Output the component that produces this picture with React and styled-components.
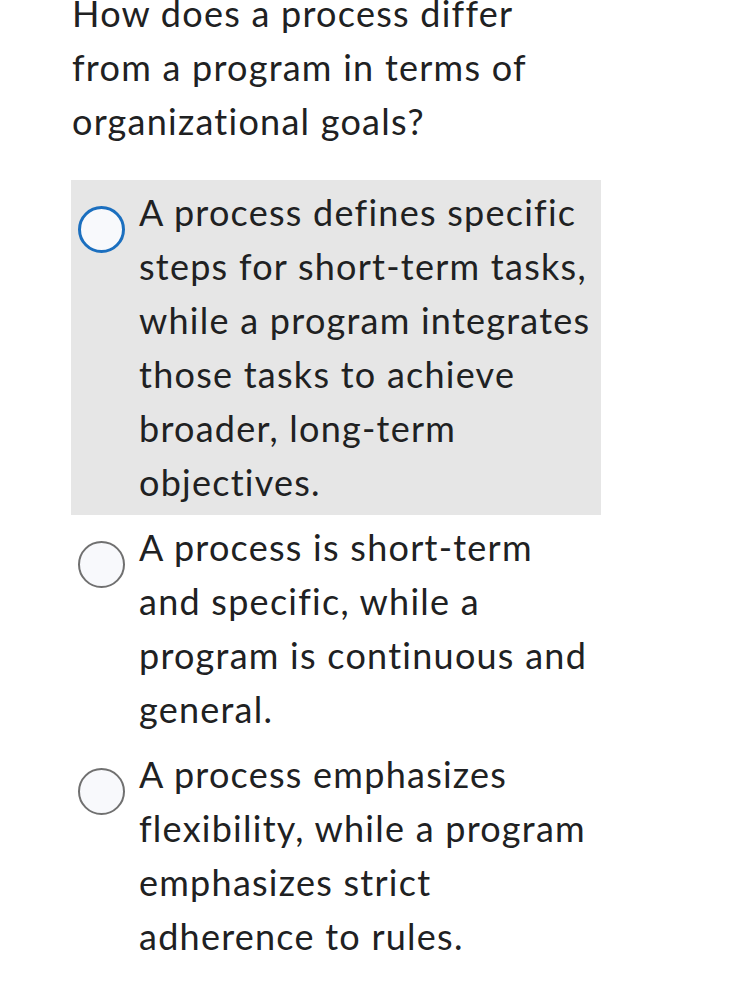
import React, { useState } from 'react';
import styled, { createGlobalStyle } from 'styled-components';

const GlobalStyle = createGlobalStyle`
  html, body {
    margin: 0;
    padding: 0;
    background: #ffffff;
  }
  body {
    font-family: Lato, "Open Sans", sans-serif;
    color: #202122;
    font-variant-ligatures: none;
  }
`;

const options = [
  'A process defines specific steps for short-term tasks, while a program integrates those tasks to achieve broader, long-term objectives.',
  'A process is short-term and specific, while a program is continuous and general.',
  'A process emphasizes flexibility, while a program emphasizes strict adherence to rules.',
];

function App() {
  const [focused, setFocused] = useState(0);

  return (
    <Page>
      <GlobalStyle />
      <Question>
        How does a process differ from a program in terms of organizational
        goals?
      </Question>
      <OptionList>
        {options.map((text, idx) => (
          <Option
            key={idx}
            $active={focused === idx}
            onClick={() => setFocused(idx)}
          >
            <Radio $active={focused === idx} />
            <OptionText>{text}</OptionText>
          </Option>
        ))}
      </OptionList>
    </Page>
  );
}

const Page = styled.div`
  padding-left: 71px;
  width: 530px;
  overflow: hidden;
`;

const Question = styled.p`
  margin: -14px 0 32px 1px;
  max-width: 480px;
  font-size: 36px;
  line-height: 54px;
  letter-spacing: 1.25px;
`;

const OptionList = styled.div`
  display: flex;
  flex-direction: column;
`;

const Option = styled.div`
  display: flex;
  align-items: flex-start;
  padding: 5px 0 6px;
  background: ${(p) => (p.$active ? '#e6e6e6' : 'transparent')};
  cursor: pointer;
`;

const Radio = styled.span`
  flex: none;
  box-sizing: border-box;
  width: 47px;
  height: 47px;
  margin: 21px 0 0 7px;
  border-radius: 50%;
  background: #f8f9fc;
  border: ${(p) => (p.$active ? '3.5px solid #1b6fbf' : '2px solid #707070')};
`;

const OptionText = styled.div`
  width: 456px;
  margin-left: 14px;
  font-size: 36px;
  line-height: 54px;
  letter-spacing: 1.25px;
`;

export default App;
